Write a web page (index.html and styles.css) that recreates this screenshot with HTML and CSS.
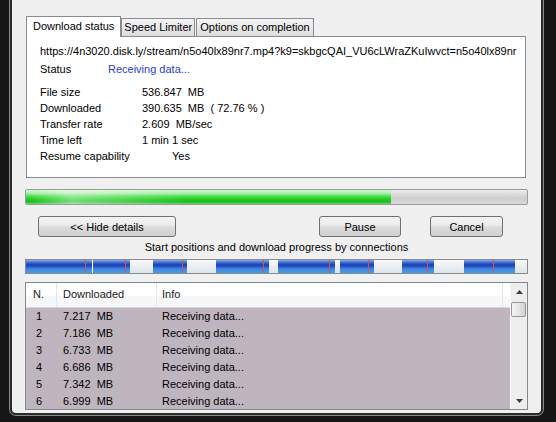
FILE: index.html
```html
<!DOCTYPE html>
<html lang="en">
<head>
    <meta charset="UTF-8">
    <title>72% 4n3020.disk.ly</title>
    <link rel="stylesheet" href="styles.css">
</head>
<body>
    <div class="frame">
        <div class="window">
            <div class="tabs">
                <div class="tab active">Download status</div>
                <div class="tab">Speed Limiter</div>
                <div class="tab last">Options on completion</div>
            </div>

            <div class="panel">
                <div class="url">https://4n3020.disk.ly/stream/n5o40lx89nr7.mp4?k9=skbgcQAI_VU6cLWraZKuIwvct=n5o40lx89nr</div>
                <div class="status">
                    <span class="status-label">Status</span>
                    <span class="status-value">Receiving data...</span>
                </div>
                <div class="info">
                    <span>File size</span><span class="val">536.847  MB</span>
                    <span>Downloaded</span><span class="val">390.635  MB  ( 72.76 % )</span>
                    <span>Transfer rate</span><span class="val">2.609  MB/sec</span>
                    <span>Time left</span><span class="val">1 min 1 sec</span>
                    <span>Resume capability</span><span class="val yes">Yes</span>
                </div>
            </div>

            <div class="progress">
                <div class="fill" style="width: 72.76%"></div>
            </div>

            <div class="actions">
                <button class="btn hide">&lt;&lt; Hide details</button>
                <button class="btn pause">Pause</button>
                <button class="btn cancel">Cancel</button>
            </div>

            <div class="caption">Start positions and download progress by connections</div>

            <!-- one span per piece of the file: received, connection cursor, gap -->
            <div class="connections">
                <span class="seg got" style="width:59px"></span>
                <span class="seg mark"></span>
                <span class="seg got" style="width:6px"></span>
                <span class="seg split"></span>
                <span class="seg got" style="width:32px"></span>
                <span class="seg mark"></span>
                <span class="seg got" style="width:4px"></span>
                <span class="seg left" style="width:23px"></span>
                <span class="seg got" style="width:29px"></span>
                <span class="seg mark"></span>
                <span class="seg got" style="width:4px"></span>
                <span class="seg left" style="width:29px"></span>
                <span class="seg got" style="width:47px"></span>
                <span class="seg mark"></span>
                <span class="seg got" style="width:5px"></span>
                <span class="seg left" style="width:9px"></span>
                <span class="seg got" style="width:51px"></span>
                <span class="seg mark"></span>
                <span class="seg got" style="width:5px"></span>
                <span class="seg left" style="width:5px"></span>
                <span class="seg got" style="width:28px"></span>
                <span class="seg mark"></span>
                <span class="seg got" style="width:5px"></span>
                <span class="seg left" style="width:28px"></span>
                <span class="seg got" style="width:25px"></span>
                <span class="seg mark"></span>
                <span class="seg got" style="width:6px"></span>
                <span class="seg left" style="width:30px"></span>
                <span class="seg got" style="width:29px"></span>
                <span class="seg mark"></span>
                <span class="seg got" style="width:21px"></span>
                <span class="seg left" style="width:12px"></span>
            </div>

            <div class="list">
                <div class="grid">
                    <div class="head">
                        <span>N.</span><span>Downloaded</span><span>Info</span><span></span>
                    </div>
                    <div class="rows">
                        <div class="row"><span>1</span><span>7.217  MB</span><span>Receiving data...</span></div>
                        <div class="row"><span>2</span><span>7.186  MB</span><span>Receiving data...</span></div>
                        <div class="row"><span>3</span><span>6.733  MB</span><span>Receiving data...</span></div>
                        <div class="row"><span>4</span><span>6.686  MB</span><span>Receiving data...</span></div>
                        <div class="row"><span>5</span><span>7.342  MB</span><span>Receiving data...</span></div>
                        <div class="row"><span>6</span><span>6.999  MB</span><span>Receiving data...</span></div>
                    </div>
                </div>
                <div class="scrollbar">
                    <div class="arrow">
                        <svg width="7" height="4" viewBox="0 0 7 4"><polygon points="0,4 3.5,0 7,4" fill="#3c3c3c"/></svg>
                    </div>
                    <div class="thumb"></div>
                    <div class="arrow down">
                        <svg width="7" height="4" viewBox="0 0 7 4"><polygon points="0,0 7,0 3.5,4" fill="#3c3c3c"/></svg>
                    </div>
                </div>
            </div>
        </div>
    </div>
</body>
</html>
```

FILE: styles.css
```css
* {
    box-sizing: border-box;
}

body {
    margin: 0;
    background-color: #161616;
    font-family: "Liberation Sans", Arial, sans-serif;
    font-size: 11px;
    color: #000;
}

/* dark window frame with its thin light edge */
.frame {
    margin-left: 9px;
    width: 535px;
    border: 1px solid #8a8a8a;
    border-top: none;
    border-radius: 0 0 7px 7px;
}

.window {
    background-color: #f0f0f0;
    border: 2px solid #2b2b2b;
    border-top: none;
    border-radius: 0 0 6px 6px;
    padding: 16px 13px 3px 13px;
}

/* tabs */
.tabs {
    display: flex;
    align-items: flex-end;
    height: 20px;
    margin-left: 1px;
}

.tab {
    height: 18px;
    line-height: 17px;
    padding: 0 2px;
    border: 1px solid #898c95;
    border-bottom: none;
    background: linear-gradient(#f4f4f4, #e9e9e9 50%, #dcdcdc);
    white-space: nowrap;
}

.tab.active {
    position: relative;
    height: 21px;
    line-height: 19px;
    margin-bottom: -1px;
    padding: 0 6px;
    background: #fff;
}

.tab.last {
    margin-left: 1px;
    padding: 0 3px;
}

.panel {
    height: 142px;
    margin: 0 2px 0 1px;
    padding: 6px 0 0 13px;
    background-color: #fff;
    border: 1px solid #898c95;
    line-height: 16px;
}

.url {
    white-space: nowrap;
}

.status {
    display: flex;
    margin-top: 2px;
}

.status-label {
    width: 68px;
}

.status-value {
    color: #1f3ecb;
}

.info {
    display: grid;
    grid-template-columns: 102px auto;
    margin-top: 7px;
}

.val {
    white-space: pre;
}

.val.yes {
    padding-left: 30px;
}

/* overall progress */
.progress {
    display: flex;
    height: 16px;
    margin-top: 11px;
    border: 1px solid #9b9b9b;
    border-radius: 2px;
    overflow: hidden;
    background: linear-gradient(#ececec, #dadada 35%, #cdcdcd 60%, #d9d9d9);
}

.progress .fill {
    background:
        linear-gradient(90deg, rgba(255,255,255,0) 5px, rgba(255,255,255,0.4) 45px, rgba(255,255,255,0) 160px),
        linear-gradient(#d2f8d2, #a4eea4 25%, #4fdc50 45%, #26cc28 65%, #1abd1c 85%, #66da66);
}

/* buttons */
.actions {
    display: flex;
    margin-top: 11px;
    padding: 0 25px 0 13px;
}

.btn {
    height: 21px;
    padding: 0;
    font: inherit;
    color: #000;
    border: 1px solid #707070;
    border-radius: 3px;
    background: linear-gradient(#f3f3f3, #ebebeb 48%, #dddddd 50%, #cfcfcf);
}

.hide {
    width: 138px;
}

.pause {
    width: 82px;
    margin-left: auto;
}

.cancel {
    width: 73px;
    margin-left: 29px;
}

.caption {
    margin-top: 3px;
    line-height: 14px;
    text-align: center;
}

/* connection map */
.connections {
    display: flex;
    height: 15px;
    margin-top: 5px;
    border: 1px solid #8a8a8a;
    overflow: hidden;
}

.seg {
    flex: none;
}

.seg.got {
    background: linear-gradient(#8aaeea, #4a78d8 15%, #1d44b4 35%, #2252c6 50%, #3f7fdc 65%, #4b93e4 85%, #2fa3e6);
}

.seg.left {
    background: linear-gradient(#f7f9fa, #eaeef1 50%, #dde4ea);
}

.seg.mark {
    width: 1px;
    background-color: #cf5a44;
}

.seg.split {
    width: 1px;
    background-color: #fff;
}

/* connections list */
.list {
    display: flex;
    height: 128px;
    margin-top: 8px;
    border: 1px solid #828790;
    background-color: #fff;
}

.grid {
    flex: 1;
    overflow: hidden;
}

.head,
.row {
    display: grid;
    grid-template-columns: 31px 100px 346px 1fr;
}

.head {
    height: 25px;
    line-height: 23px;
    color: #1b1b1b;
    border-bottom: 1px solid #d6d6d6;
    background: linear-gradient(#fff 55%, #f6f7f8 55%);
}

.head span {
    padding-left: 6px;
    border-right: 1px solid #e4e7eb;
}

.head span:first-child {
    padding-left: 7px;
}

.head span:nth-child(3) {
    padding-left: 5px;
}

.head span:last-child {
    border-right: none;
}

.rows {
    height: 100%;
    background-color: #bfb5be;
}

.row {
    height: 17px;
    line-height: 17px;
    white-space: pre;
}

.row span:first-child {
    padding-left: 10px;
}

.row span:nth-child(2) {
    padding-left: 6px;
}

.row span:nth-child(3) {
    padding-left: 5px;
}

.scrollbar {
    display: flex;
    flex-direction: column;
    width: 17px;
    background-color: #eeeeee;
    border-left: 1px solid #f7f7f7;
}

.arrow {
    display: flex;
    align-items: center;
    justify-content: center;
    height: 17px;
}

.arrow.down {
    margin-top: auto;
}

.thumb {
    height: 15px;
    margin: 2px 1px 0 0;
    border: 1px solid #979797;
    border-radius: 2px;
    background: linear-gradient(90deg, #f4f4f4, #e6e6e6 50%, #d2d2d2);
}
```
